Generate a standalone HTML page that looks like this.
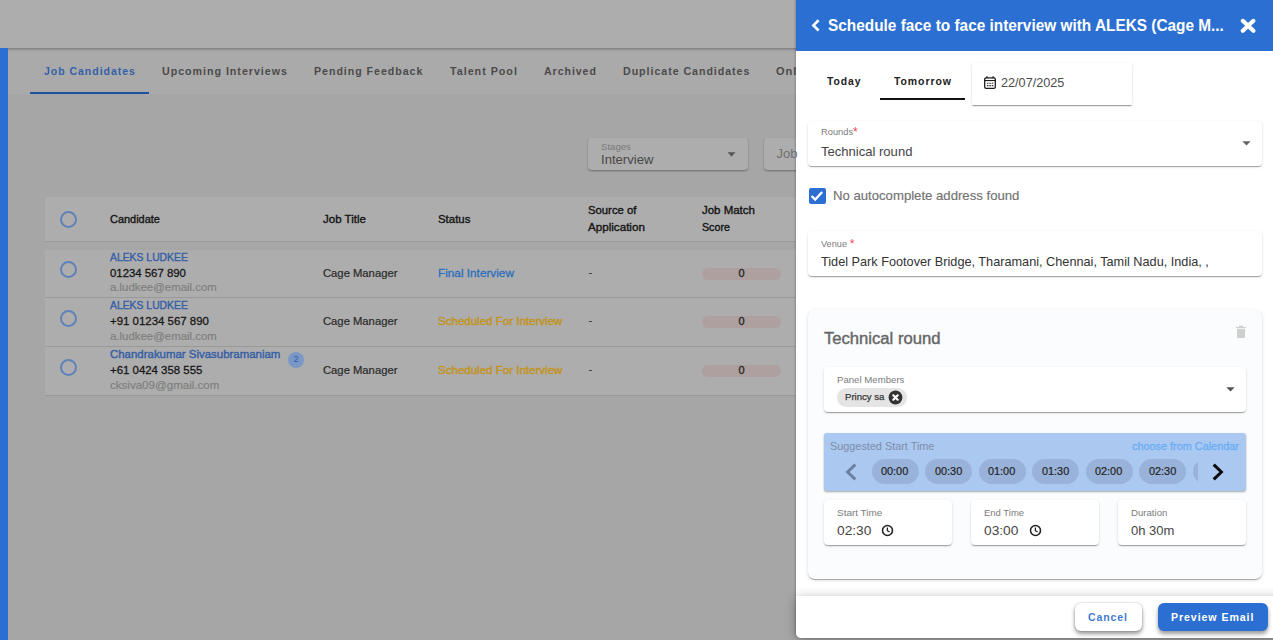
<!DOCTYPE html>
<html>
<head>
<meta charset="utf-8">
<title>Schedule Interview</title>
<style>
html,body{margin:0;padding:0;}
body{width:1273px;height:640px;overflow:hidden;background:#a6a6a6;font-family:"Liberation Sans",sans-serif;}
#root{position:relative;width:1273px;height:640px;overflow:hidden;}
.a{position:absolute;box-sizing:border-box;}
.t{position:absolute;white-space:nowrap;line-height:20px;height:20px;transform-origin:0 50%;}
.box{position:absolute;box-sizing:border-box;background:#fff;border-radius:4px;box-shadow:0 2px 1px -1px rgba(0,0,0,.2),0 1px 1px 0 rgba(0,0,0,.14),0 1px 3px 0 rgba(0,0,0,.12);}
.circ{position:absolute;box-sizing:border-box;width:17px;height:17px;border:2px solid #5f83b8;border-radius:50%;}
.pill{position:absolute;height:12px;border-radius:6px;background:#ada09e;}
.chip{position:absolute;top:459px;height:25px;width:47px;border-radius:13px;background:#98b2d9;}
</style>
</head>
<body>
<div id="root">
<!-- left dimmed background -->
<div class="a" style="left:8px;top:48px;width:790px;height:46px;background:#aaaaaa;"></div>
<div class="a" style="left:0;top:0;width:800px;height:48px;background:#adadad;box-shadow:0 1px 3px rgba(0,0,0,.35);"></div>
<div class="a" style="left:0;top:48px;width:8px;height:592px;background:#2c6fd2;"></div>
<div class="a" style="left:30px;top:92px;width:119px;height:2px;background:#1f4f9d;"></div>
<!-- dropdowns -->
<div class="a" style="left:588px;top:138px;width:160px;height:32px;background:#adadad;border-radius:4px;box-shadow:0 1px 2px rgba(0,0,0,.35);"></div>
<div class="a" style="left:764px;top:138px;width:60px;height:32px;background:#adadad;border-radius:4px;box-shadow:0 1px 2px rgba(0,0,0,.35);"></div>
<svg class="a" style="left:727px;top:151.7px;" width="9" height="5" viewBox="0 0 9 5"><path d="M0.5 0.3h8L4.5 4.6z" fill="#555"/></svg>
<!-- table -->
<div class="a" style="left:45px;top:197px;width:760px;height:45px;background:#adadad;border-bottom:1px solid #9b9b9b;"></div>
<div class="a" style="left:45px;top:250px;width:760px;height:48px;background:#adadad;border-bottom:1px solid #999;"></div>
<div class="a" style="left:45px;top:298px;width:760px;height:49px;background:#adadad;border-bottom:1px solid #999;"></div>
<div class="a" style="left:45px;top:347px;width:760px;height:49px;background:#adadad;border-bottom:1px solid #999;"></div>
<div class="circ" style="left:60px;top:211px;"></div>
<div class="circ" style="left:60px;top:261px;"></div>
<div class="circ" style="left:60px;top:310px;"></div>
<div class="circ" style="left:60px;top:359px;"></div>
<div class="pill" style="left:702px;top:268px;width:79px;"></div>
<div class="pill" style="left:702px;top:316px;width:79px;"></div>
<div class="pill" style="left:702px;top:365px;width:79px;"></div>
<div class="a" style="left:288px;top:352px;width:16px;height:16px;border-radius:50%;background:#7a97c6;"></div>

<!-- right panel -->
<div class="a" style="left:795.5px;top:0;width:478px;height:638px;background:#fff;border-radius:0 0 0 5px;box-shadow:-1px 0 2px rgba(0,0,0,.2);"></div>
<div class="a" style="left:795.5px;top:0;width:478px;height:51px;background:#2c6fd2;"></div>
<svg class="a" style="left:810px;top:18px;" width="12" height="15" viewBox="0 0 12 15"><path d="M8.6 2.3L3.4 7.4l5.2 5.1" fill="none" stroke="#fff" stroke-width="2.6"/></svg>
<svg class="a" style="left:1239px;top:18px;" width="18" height="17" viewBox="0 0 18 17"><path d="M3.8 2.8L14.4 12.8M14.4 2.8L3.8 12.8" fill="none" stroke="#fff" stroke-width="4.1" stroke-linecap="round"/></svg>
<!-- today / tomorrow -->
<div class="a" style="left:880px;top:98px;width:85px;height:2px;background:#111;"></div>
<div class="box" style="left:972px;top:63px;width:160px;height:42px;border-radius:1px;"></div>
<svg class="a" style="left:984px;top:76px;" width="12" height="13" viewBox="0 0 12 13"><rect x="0.7" y="1.9" width="10.6" height="10.4" rx="1.4" fill="none" stroke="#1c1c1c" stroke-width="1.3"/><path d="M0.7 4.55h10.6" stroke="#1c1c1c" stroke-width="1.1"/><path d="M2.9 0.2v2M9.1 0.2v2" stroke="#1c1c1c" stroke-width="1.3"/><path d="M2.9 7.3h6.4M2.9 9.6h6.4" stroke="#333" stroke-width="1.1" stroke-dasharray="1.6 0.8"/></svg>
<!-- rounds -->
<div class="box" style="left:808px;top:121px;width:454px;height:45px;"></div>
<svg class="a" style="left:1242px;top:140.5px;" width="9" height="5" viewBox="0 0 9 5"><path d="M0.3 0.3h8.4L4.5 4.6z" fill="#666"/></svg>
<!-- checkbox -->
<div class="a" style="left:808.5px;top:187.5px;width:17px;height:16.5px;border-radius:2px;background:#2c6fd2;"></div>
<svg class="a" style="left:808px;top:187px;" width="18" height="18" viewBox="0 0 18 18"><path d="M3.6 9l3.6 3.6 7-7.6" fill="none" stroke="#fff" stroke-width="2.4"/></svg>
<!-- venue -->
<div class="box" style="left:808px;top:231px;width:454px;height:45px;"></div>
<!-- card -->
<div class="a" style="left:808px;top:310px;width:454px;height:269px;background:#fbfcfe;border-radius:7px;box-shadow:0 2px 1px -1px rgba(0,0,0,.2),0 1px 1px 0 rgba(0,0,0,.14),0 1px 4px 0 rgba(0,0,0,.12);"></div>
<svg class="a" style="left:1235px;top:325px;" width="12" height="13" viewBox="0 0 12 13"><path d="M1 2h10v1.3H1zM4 0.8h4v1.4H4zM2 4h8v8.2a.8.8 0 0 1-.8.8H2.8a.8.8 0 0 1-.8-.8z" fill="#cfcfcf"/></svg>
<div class="box" style="left:824px;top:367px;width:422px;height:45px;"></div>
<div class="a" style="left:837px;top:388px;width:70px;height:19px;border-radius:10px;background:#e4e4e4;"></div>
<svg class="a" style="left:888px;top:389.5px;" width="15" height="15" viewBox="0 0 15 15"><circle cx="7.5" cy="7.5" r="6.9" fill="#333"/><path d="M5.3 5.3l4.4 4.4M9.7 5.3l-4.4 4.4" stroke="#fff" stroke-width="2.2" stroke-linecap="round"/></svg>
<svg class="a" style="left:1226px;top:386.7px;" width="9" height="5" viewBox="0 0 9 5"><path d="M0.3 0.3h8.4L4.5 4.6z" fill="#555"/></svg>
<!-- suggested -->
<div class="a" style="left:824px;top:433px;width:422px;height:58px;background:#abc8f1;border-radius:3px;box-shadow:0 1px 2px rgba(0,0,0,.35);overflow:hidden;">
  <div class="chip" style="left:48px;top:26px;"></div>
  <div class="chip" style="left:101px;top:26px;"></div>
  <div class="chip" style="left:155px;top:26px;"></div>
  <div class="chip" style="left:208px;top:26px;"></div>
  <div class="chip" style="left:262px;top:26px;"></div>
  <div class="chip" style="left:315px;top:26px;"></div>
  <div class="a" style="left:369px;top:26px;width:5px;height:25px;overflow:hidden;"><div class="chip" style="left:0;top:0;"></div></div>
</div>
<svg class="a" style="left:843px;top:462px;" width="16" height="20" viewBox="0 0 16 20"><path d="M12.3 2.6L4.6 10l7.7 7.4" fill="none" stroke="#6b7f9f" stroke-width="2.9"/></svg>
<svg class="a" style="left:1210px;top:462px;" width="16" height="20" viewBox="0 0 16 20"><path d="M3.7 2.6L11.4 10l-7.7 7.4" fill="none" stroke="#0a0a0a" stroke-width="3"/></svg>
<!-- time boxes -->
<div class="box" style="left:824px;top:500px;width:128px;height:45px;"></div>
<div class="box" style="left:971px;top:500px;width:128px;height:45px;"></div>
<div class="box" style="left:1118px;top:500px;width:128px;height:45px;"></div>
<svg class="a" style="left:880.6px;top:524px;" width="13" height="13" viewBox="0 0 13 13"><circle cx="6.5" cy="6.5" r="5" fill="none" stroke="#222" stroke-width="1.55"/><path d="M6.4 3.6v3.1l2.2 1.3" fill="none" stroke="#222" stroke-width="1.3"/></svg>
<svg class="a" style="left:1028.8px;top:524px;" width="13" height="13" viewBox="0 0 13 13"><circle cx="6.5" cy="6.5" r="5" fill="none" stroke="#222" stroke-width="1.55"/><path d="M6.4 3.6v3.1l2.2 1.3" fill="none" stroke="#222" stroke-width="1.3"/></svg>
<!-- footer -->
<div class="a" style="left:795.5px;top:596px;width:490px;height:42px;background:#fff;border-radius:0 0 0 5px;box-shadow:0 2px 12px rgba(0,0,0,.3);"></div>
<div class="a" style="left:1075px;top:603px;width:67px;height:28px;background:#fff;border-radius:6px;box-shadow:0 3px 4px rgba(0,0,0,.4),0 0 2px rgba(0,0,0,.25);"></div>
<div class="a" style="left:1158px;top:603px;width:110px;height:28px;background:#2c6fd2;border-radius:6px;box-shadow:0 3px 4px rgba(0,0,0,.4);"></div>

<span class="t" style="left:44px;top:61.30px;font-size:11px;font-weight:700;color:#3560a8;letter-spacing:1px;transform:scaleX(0.9578);">Job Candidates</span>
<span class="t" style="left:162px;top:61.30px;font-size:11px;font-weight:700;color:#4a4a4a;letter-spacing:1px;transform:scaleX(0.9709);">Upcoming Interviews</span>
<span class="t" style="left:314px;top:61.30px;font-size:11px;font-weight:700;color:#4a4a4a;letter-spacing:1px;transform:scaleX(0.9661);">Pending Feedback</span>
<span class="t" style="left:450px;top:61.30px;font-size:11px;font-weight:700;color:#4a4a4a;letter-spacing:1px;transform:scaleX(0.9771);">Talent Pool</span>
<span class="t" style="left:544px;top:61.30px;font-size:11px;font-weight:700;color:#4a4a4a;letter-spacing:1px;transform:scaleX(0.9597);">Archived</span>
<span class="t" style="left:623px;top:61.30px;font-size:11px;font-weight:700;color:#4a4a4a;letter-spacing:1px;transform:scaleX(0.9659);">Duplicate Candidates</span>
<span class="t" style="left:776px;top:61.30px;font-size:11px;font-weight:700;color:#4a4a4a;letter-spacing:1px;">Onl</span>
<span class="t" style="left:600.5px;top:136.50px;font-size:9px;font-weight:400;color:#7a7a7a;transform:scaleX(1.0667);">Stages</span>
<span class="t" style="left:600.5px;top:149.50px;font-size:13px;font-weight:400;color:#484848;transform:scaleX(1.0071);">Interview</span>
<span class="t" style="left:776.5px;top:144.30px;font-size:13px;font-weight:400;color:#707070;">Job</span>
<span class="t" style="left:110px;top:208.50px;font-size:11px;font-weight:400;color:#141414;-webkit-text-stroke:0.35px #141414;transform:scaleX(0.9949);">Candidate</span>
<span class="t" style="left:322.5px;top:208.50px;font-size:11px;font-weight:400;color:#141414;-webkit-text-stroke:0.35px #141414;transform:scaleX(1.0471);">Job Title</span>
<span class="t" style="left:437.5px;top:208.50px;font-size:11px;font-weight:400;color:#141414;-webkit-text-stroke:0.35px #141414;transform:scaleX(1.0389);">Status</span>
<span class="t" style="left:588px;top:199.50px;font-size:11px;font-weight:400;color:#141414;-webkit-text-stroke:0.35px #141414;transform:scaleX(1.0277);">Source of</span>
<span class="t" style="left:588px;top:216.50px;font-size:11px;font-weight:400;color:#141414;-webkit-text-stroke:0.35px #141414;transform:scaleX(1.0571);">Application</span>
<span class="t" style="left:702px;top:199.50px;font-size:11px;font-weight:400;color:#141414;-webkit-text-stroke:0.35px #141414;transform:scaleX(1.0424);">Job Match</span>
<span class="t" style="left:702px;top:216.50px;font-size:11px;font-weight:400;color:#141414;-webkit-text-stroke:0.35px #141414;transform:scaleX(0.9704);">Score</span>
<span class="t" style="left:110px;top:246.50px;font-size:11px;font-weight:400;color:#3560a6;-webkit-text-stroke:0.4px #3560a6;transform:scaleX(0.9437);">ALEKS LUDKEE</span>
<span class="t" style="left:110px;top:262.50px;font-size:11px;font-weight:400;color:#161616;-webkit-text-stroke:0.27px #161616;transform:scaleX(1.0338);">01234 567 890</span>
<span class="t" style="left:110px;top:276.60px;font-size:11px;font-weight:400;color:#7e7e7e;-webkit-text-stroke:0.15px #7e7e7e;transform:scaleX(1.0390);">a.ludkee@email.com</span>
<span class="t" style="left:110px;top:294.50px;font-size:11px;font-weight:400;color:#3560a6;-webkit-text-stroke:0.4px #3560a6;transform:scaleX(0.9437);">ALEKS LUDKEE</span>
<span class="t" style="left:110px;top:310.50px;font-size:11px;font-weight:400;color:#161616;-webkit-text-stroke:0.27px #161616;transform:scaleX(1.0397);">+91 01234 567 890</span>
<span class="t" style="left:110px;top:325.60px;font-size:11px;font-weight:400;color:#7e7e7e;-webkit-text-stroke:0.15px #7e7e7e;transform:scaleX(1.0390);">a.ludkee@email.com</span>
<span class="t" style="left:110px;top:343.50px;font-size:11px;font-weight:400;color:#3560a6;-webkit-text-stroke:0.4px #3560a6;transform:scaleX(1.0399);">Chandrakumar Sivasubramaniam</span>
<span class="t" style="left:110px;top:359.50px;font-size:11px;font-weight:400;color:#161616;-webkit-text-stroke:0.27px #161616;transform:scaleX(1.0380);">+61 0424 358 555</span>
<span class="t" style="left:110px;top:374.60px;font-size:11px;font-weight:400;color:#7e7e7e;-webkit-text-stroke:0.15px #7e7e7e;transform:scaleX(1.0510);">cksiva09@gmail.com</span>
<span class="t" style="left:293.5px;top:349.00px;font-size:9px;font-weight:400;color:#2f5da8;">2</span>
<span class="t" style="left:322.5px;top:262.50px;font-size:11px;font-weight:400;color:#2a2a2a;-webkit-text-stroke:0.2px #2a2a2a;transform:scaleX(1.0222);">Cage Manager</span>
<span class="t" style="left:588.5px;top:262.00px;font-size:11px;font-weight:400;color:#2a2a2a;">-</span>
<span class="t" style="left:738.5px;top:263.00px;font-size:11px;font-weight:400;color:#222;-webkit-text-stroke:0.3px #222;">0</span>
<span class="t" style="left:322.5px;top:310.50px;font-size:11px;font-weight:400;color:#2a2a2a;-webkit-text-stroke:0.2px #2a2a2a;transform:scaleX(1.0222);">Cage Manager</span>
<span class="t" style="left:588.5px;top:310.00px;font-size:11px;font-weight:400;color:#2a2a2a;">-</span>
<span class="t" style="left:738.5px;top:311.00px;font-size:11px;font-weight:400;color:#222;-webkit-text-stroke:0.3px #222;">0</span>
<span class="t" style="left:322.5px;top:359.50px;font-size:11px;font-weight:400;color:#2a2a2a;-webkit-text-stroke:0.2px #2a2a2a;transform:scaleX(1.0222);">Cage Manager</span>
<span class="t" style="left:588.5px;top:359.00px;font-size:11px;font-weight:400;color:#2a2a2a;">-</span>
<span class="t" style="left:738.5px;top:360.00px;font-size:11px;font-weight:400;color:#222;-webkit-text-stroke:0.3px #222;">0</span>
<span class="t" style="left:437.5px;top:262.50px;font-size:11px;font-weight:400;color:#2e70bd;-webkit-text-stroke:0.3px #2e70bd;transform:scaleX(1.0702);">Final Interview</span>
<span class="t" style="left:437.5px;top:310.50px;font-size:11px;font-weight:400;color:#c3931c;-webkit-text-stroke:0.4px #c3931c;transform:scaleX(1.0487);">Scheduled For Interview</span>
<span class="t" style="left:437.5px;top:359.50px;font-size:11px;font-weight:400;color:#c3931c;-webkit-text-stroke:0.4px #c3931c;transform:scaleX(1.0487);">Scheduled For Interview</span>
<span class="t" style="left:828px;top:15.50px;font-size:16px;font-weight:700;color:#fff;transform:scaleX(0.9610);">Schedule face to face interview with ALEKS (Cage M...</span>
<span class="t" style="left:827px;top:71.00px;font-size:11.5px;font-weight:700;color:#222;letter-spacing:1px;transform:scaleX(0.9023);">Today</span>
<span class="t" style="left:894px;top:71.00px;font-size:11.5px;font-weight:700;color:#222;letter-spacing:1px;transform:scaleX(0.9122);">Tomorrow</span>
<span class="t" style="left:1000.5px;top:72.50px;font-size:12px;font-weight:400;color:#4c4c4c;transform:scaleX(1.0556);">22/07/2025</span>
<span class="t" style="left:820.5px;top:122.30px;font-size:9px;font-weight:400;color:#7c7c7c;transform:scaleX(1.0335);">Rounds<span style="color:#ef4b55;font-size:12px;line-height:0;position:relative;top:1px">*</span></span>
<span class="t" style="left:820.5px;top:141.80px;font-size:13px;font-weight:400;color:#444;transform:scaleX(1.0037);">Technical round</span>
<span class="t" style="left:833px;top:185.80px;font-size:13px;font-weight:400;color:#727272;-webkit-text-stroke:0.15px #727272;transform:scaleX(1.0114);">No autocomplete address found</span>
<span class="t" style="left:820.5px;top:233.50px;font-size:9px;font-weight:400;color:#7c7c7c;transform:scaleX(1.0213);">Venue <span style="color:#ef4b55;font-size:12px;line-height:0;position:relative;top:1px">*</span></span>
<span class="t" style="left:820.5px;top:252.00px;font-size:13px;font-weight:400;color:#333;transform:scaleX(0.9766);">Tidel Park Footover Bridge, Tharamani, Chennai, Tamil Nadu, India, ,</span>
<span class="t" style="left:824px;top:328.50px;font-size:16px;font-weight:400;color:#666;-webkit-text-stroke:0.4px #666;transform:scaleX(1.0386);">Technical round</span>
<span class="t" style="left:837px;top:370.00px;font-size:9.5px;font-weight:400;color:#7c7c7c;transform:scaleX(1.0131);">Panel Members</span>
<span class="t" style="left:844.5px;top:386.50px;font-size:9.5px;font-weight:400;color:#383838;-webkit-text-stroke:0.25px #383838;transform:scaleX(1.0082);">Princy sa</span>
<span class="t" style="left:830px;top:435.50px;font-size:11px;font-weight:400;color:#7d8da9;transform:scaleX(0.9869);">Suggested Start Time</span>
<span class="t" style="left:1132px;top:435.50px;font-size:11px;font-weight:400;color:#69aef4;-webkit-text-stroke:0.3px #69aef4;transform:scaleX(0.9877);">choose from Calendar</span>
<span class="t" style="left:881px;top:460.90px;font-size:11px;font-weight:400;color:#242424;-webkit-text-stroke:0.2px #242424;transform:scaleX(0.9880);">00:00</span>
<span class="t" style="left:934.5px;top:460.90px;font-size:11px;font-weight:400;color:#242424;-webkit-text-stroke:0.2px #242424;transform:scaleX(0.9880);">00:30</span>
<span class="t" style="left:988px;top:460.90px;font-size:11px;font-weight:400;color:#242424;-webkit-text-stroke:0.2px #242424;transform:scaleX(0.9880);">01:00</span>
<span class="t" style="left:1041.5px;top:460.90px;font-size:11px;font-weight:400;color:#242424;-webkit-text-stroke:0.2px #242424;transform:scaleX(0.9880);">01:30</span>
<span class="t" style="left:1095px;top:460.90px;font-size:11px;font-weight:400;color:#242424;-webkit-text-stroke:0.2px #242424;transform:scaleX(0.9880);">02:00</span>
<span class="t" style="left:1148.5px;top:460.90px;font-size:11px;font-weight:400;color:#242424;-webkit-text-stroke:0.2px #242424;transform:scaleX(0.9880);">02:30</span>
<span class="t" style="left:836.5px;top:502.80px;font-size:9.5px;font-weight:400;color:#7c7c7c;transform:scaleX(1.0486);">Start Time</span>
<span class="t" style="left:983.5px;top:502.80px;font-size:9.5px;font-weight:400;color:#7c7c7c;transform:scaleX(0.9990);">End Time</span>
<span class="t" style="left:1130.5px;top:502.80px;font-size:9.5px;font-weight:400;color:#7c7c7c;transform:scaleX(1.0133);">Duration</span>
<span class="t" style="left:836.5px;top:521.00px;font-size:13px;font-weight:400;color:#444;transform:scaleX(1.0569);">02:30</span>
<span class="t" style="left:983.5px;top:521.00px;font-size:13px;font-weight:400;color:#444;transform:scaleX(1.0569);">03:00</span>
<span class="t" style="left:1130.5px;top:521.00px;font-size:13px;font-weight:400;color:#444;transform:scaleX(1.0006);">0h 30m</span>
<span class="t" style="left:1088px;top:607.00px;font-size:11.5px;font-weight:700;color:#3d79d2;letter-spacing:1px;transform:scaleX(0.9106);">Cancel</span>
<span class="t" style="left:1171px;top:607.00px;font-size:11.5px;font-weight:700;color:#fff;letter-spacing:1px;transform:scaleX(0.9221);">Preview Email</span>
</div>
</body>
</html>
